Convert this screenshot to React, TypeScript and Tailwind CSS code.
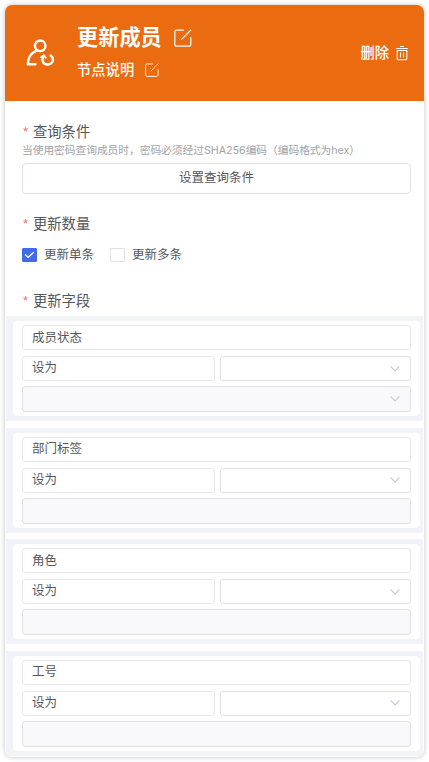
import React, { useState } from 'react';

interface Field {
  name: string;
  selectable?: boolean;
}

const fields: Field[] = [
  { name: '成员状态', selectable: true },
  { name: '部门标签' },
  { name: '角色' },
  { name: '工号' },
];

const EditIcon: React.FC<{ size: number; className?: string }> = ({ size, className = '' }) => (
  <svg width={size} height={size} viewBox="0 0 18 18" fill="none" stroke="currentColor" strokeWidth="1.2" strokeLinecap="round" className={className}>
    <path d="M9.500 1.200H2.800C1.600 1.200.8 2 .8 3.200v12c0 1.200.8 2 2 2h12c1.200 0 2-.8 2-2V8.500" />
    <path d="M7.600 10.400 16.800 1.200" />
  </svg>
);

const MemberIcon = () => (
  <svg width="30" height="30" viewBox="0 0 30 30" fill="none" stroke="currentColor" strokeWidth="2.4" strokeLinecap="round" strokeLinejoin="round">
    <circle cx="15.200" cy="7.800" r="5.300" />
    <path d="M11.600 12.600C6 15 3 19.400 2.800 26.200H10.400" />
    <path d="M18.600 18C16.400 21.600 17.600 26.500 22.300 26.500C28 26.500 29.800 20.600 25.600 17.600" />
    <path d="M16 19.200 18.800 17.200 20.700 19.800" strokeWidth="1.9" />
  </svg>
);

const TrashIcon = () => (
  <svg width="12" height="16" viewBox="0 0 12 16" fill="none" stroke="currentColor" strokeWidth="1.1" strokeLinecap="round">
    <path d="M.6 3.500h10.800M4.500 1.500h3M1.200 5.500v8.200c0 .6.400 1 1 1h7.600c.6 0 1-.4 1-1V5.500zM4.500 7.700v4.300M7.500 7.700v4.300" />
  </svg>
);

const ChevronIcon = () => (
  <svg width="10" height="6" viewBox="0 0 10 6" fill="none" stroke="#c5c8ce" strokeWidth="1.2" strokeLinecap="round" strokeLinejoin="round">
    <path d="M1 .8 5 4.900 9 .8" />
  </svg>
);

const Label: React.FC<{ text: string }> = ({ text }) => (
  <div className="flex h-5 items-center text-[14.3px] leading-5 text-[#55575c]">
    <span className="w-[11px] pl-px font-['Liberation_Sans'] text-[13px] text-[#f56c6c]">*</span>
    {text}
  </div>
);

const CheckOption: React.FC<{ label: string; checked: boolean; onSelect: () => void }> = ({ label, checked, onSelect }) => (
  <button type="button" role="checkbox" aria-checked={checked} onClick={onSelect} className="flex items-center gap-[7px]">
    <span className={`flex h-[14px] w-[15px] items-center justify-center rounded-[1px] border ${checked ? 'border-[#416be8] bg-[#416be8]' : 'border-[#dfe1e7] bg-white'}`}>
      {checked && (
        <svg width="11" height="8" viewBox="0 0 11 8" fill="none" stroke="white" strokeWidth="1.400">
          <path d="M1.200 3.600 4.200 6.400 9.700 1.200" />
        </svg>
      )}
    </span>
    {label}
  </button>
);

const FieldGroup: React.FC<{ field: Field }> = ({ field }) => (
  <div className="mx-px h-[105px] shrink-0 bg-[#f2f3f7] pt-[5px] pr-[3px] pl-[7px]">
    <div className="flex h-[95px] flex-col rounded-[4px] bg-white px-[9px] pt-1">
      <div className="flex h-[25px] shrink-0 items-center rounded-[3px] border border-[#e6e7ec] px-[9px]">{field.name}</div>
      <div className="mt-1.5 flex h-[25px] shrink-0 gap-[5px]">
        <div className="flex w-[193px] items-center rounded-[3px] border border-[#e6e7ec] px-[9px] pb-px">设为</div>
        <div className="flex flex-1 items-center justify-end rounded-[3px] border border-[#dfe0e8] pr-[10px]">
          <ChevronIcon />
        </div>
      </div>
      <div className="mt-[5px] flex h-[26px] shrink-0 items-center justify-end rounded-[3px] border border-[#dfe0e8] bg-[#f9f9fb] pr-[10px]">
        {field.selectable && <ChevronIcon />}
      </div>
    </div>
  </div>
);

const App: React.FC = () => {
  const [mode, setMode] = useState<'single' | 'multiple'>('single');

  return (
    <div className="h-[762px] w-[429px] bg-white pt-[5px] pl-[5px] font-['Liberation_Sans','Noto_Sans_CJK_SC',sans-serif] text-[12.5px] leading-[18px] text-[#55575c]">
      <div className="flex h-[752px] w-[419px] flex-col overflow-hidden rounded-[7px] bg-white shadow-[0_0_5px_rgba(0,0,0,0.25)]">
        <header className="flex h-24 shrink-0 items-center bg-[#eb6b10] pr-4 pl-5 text-white">
          <MemberIcon />
          <div className="ml-[22px] flex-1 pt-[2px]">
            <div className="flex h-8 items-center gap-[12px]">
              <h1 className="text-[21.2px] leading-8 font-bold">更新成员</h1>
              <EditIcon size={18} />
            </div>
            <div className="flex h-8 items-center gap-[11px]">
              <span className="text-[14.3px] font-medium">节点说明</span>
              <EditIcon size={14} />
            </div>
          </div>
          <button type="button" className="flex items-center gap-[7px] text-[14.3px] font-medium">
            删除
            <TrashIcon />
          </button>
        </header>

        <div className="shrink-0 px-[17px] pt-[21px]">
          <Label text="查询条件" />
          <p className="h-[21px] pt-px font-['Inter','Noto_Sans_CJK_SC',sans-serif] text-[10.75px] leading-4 tracking-[-0.05px] whitespace-nowrap text-[#a2a3a6]">当使用密码查询成员时，密码必须经过SHA256编码（编码格式为hex）</p>
          <button type="button" className="h-[31px] w-[389px] rounded-[4px] border border-[#dfe1e7] pb-0.5">设置查询条件</button>
        </div>

        <div className="shrink-0 px-[17px] pt-5">
          <Label text="更新数量" />
          <div className="mt-[11px] flex h-5 items-center gap-4">
            <CheckOption label="更新单条" checked={mode === 'single'} onSelect={() => setMode('single')} />
            <CheckOption label="更新多条" checked={mode === 'multiple'} onSelect={() => setMode('multiple')} />
          </div>
        </div>

        <div className="shrink-0 px-[17px] pt-[26px] pb-[5px]">
          <Label text="更新字段" />
        </div>
        <div className="flex flex-col gap-[6.6px]">
          {fields.map((field) => (
            <FieldGroup key={field.name} field={field} />
          ))}
        </div>
      </div>
    </div>
  );
};

export default App;
